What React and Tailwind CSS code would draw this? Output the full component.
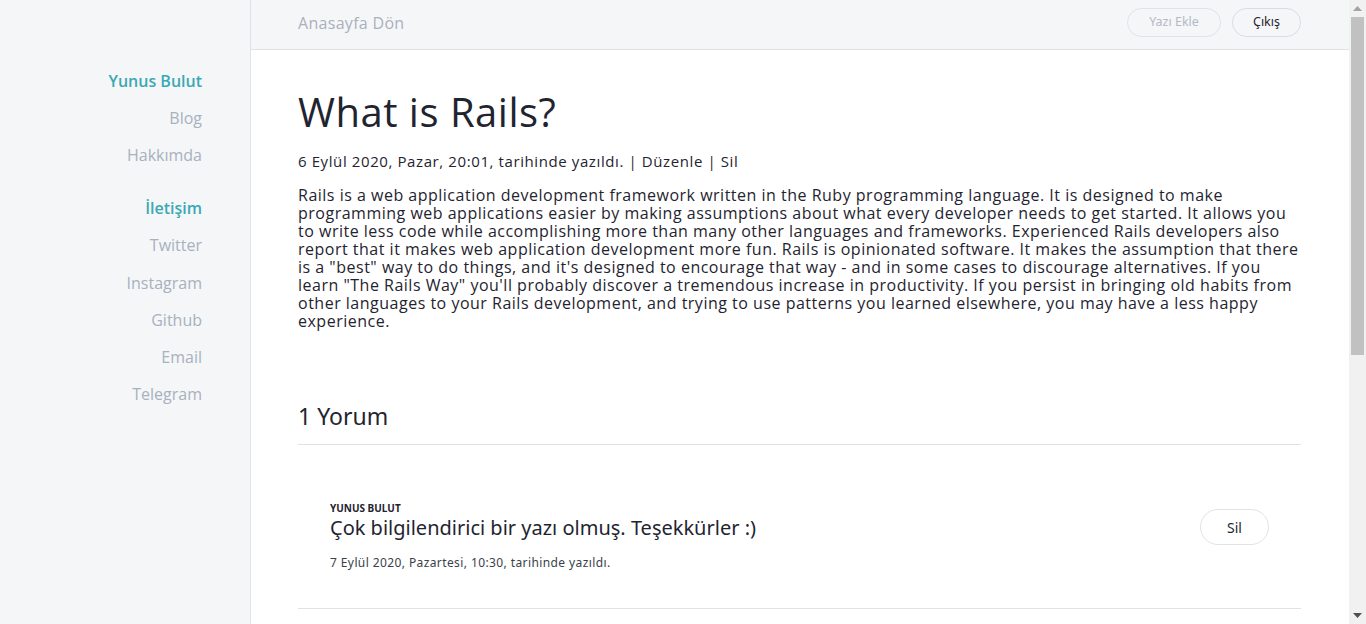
import React from "react";

const hand = { fontFamily: '"Open Sans", "Noto Sans", sans-serif' };
const sans = { fontFamily: '"Noto Sans", "Open Sans", sans-serif' };

const lines = [
  "Rails is a web application development framework written in the Ruby programming language. It is designed to make",
  "programming web applications easier by making assumptions about what every developer needs to get started. It allows you",
  "to write less code while accomplishing more than many other languages and frameworks. Experienced Rails developers also",
  "report that it makes web application development more fun. Rails is opinionated software. It makes the assumption that there",
  "is a \"best\" way to do things, and it's designed to encourage that way - and in some cases to discourage alternatives. If you",
  "learn \"The Rails Way\" you'll probably discover a tremendous increase in productivity. If you persist in bringing old habits from",
  "other languages to your Rails development, and trying to use patterns you learned elsewhere, you may have a less happy",
  "experience.",
];

export default function App() {
  return (
    <div className="flex min-h-screen bg-white" style={hand}>
      <aside className="w-[251px] shrink-0 bg-[#f5f6f8] border-r border-[#dfe3e8] pr-[48px] pt-[69px] text-right">
        <div className="text-[16px] leading-[24px] font-semibold text-[#3aa9b4]">Yunus Bulut</div>
        <div className="mt-[13px] text-[16px] leading-[24px] text-[#a7b1bf]">Blog</div>
        <div className="mt-[13px] text-[16px] leading-[24px] text-[#a7b1bf]">Hakkımda</div>
        <div className="mt-[29px] text-[16px] leading-[24px] font-semibold text-[#3aa9b4]">İletişim</div>
        <div className="mt-[13px] text-[16px] leading-[24px] text-[#a7b1bf]">Twitter</div>
        <div className="mt-[14px] text-[16px] leading-[24px] text-[#a7b1bf]">Instagram</div>
        <div className="mt-[13px] text-[16px] leading-[24px] text-[#a7b1bf]">Github</div>
        <div className="mt-[13px] text-[16px] leading-[24px] text-[#a7b1bf]">Email</div>
        <div className="mt-[13px] text-[16px] leading-[24px] text-[#a7b1bf]">Telegram</div>
      </aside>
      <main className="flex-1 min-w-0">
        <header className="h-[50px] bg-[#f5f6f8] border-b border-[#dfe3e8] flex items-center justify-between pl-[47px] pr-[48px] pb-[4px]">
          <span className="text-[16px] tracking-[0.3px] text-[#a9b1bc]">Anasayfa Dön</span>
          <div className="flex items-center gap-[11px]">
            <button className="h-[29px] w-[94px] rounded-full border border-[#dfe3e8] text-[12.5px] text-[#b3bac4]" style={sans}>Yazı Ekle</button>
            <button className="h-[29px] w-[69px] rounded-full border border-[#d8dde3] text-[12.5px] text-[#1f2430]" style={sans}>Çıkış</button>
          </div>
        </header>
        <div className="pl-[47px] pr-[48px] pt-[38px] pb-[120px] text-[#1f2430]">
          <h1 className="text-[40px] leading-[48px] font-normal tracking-[0.5px]">What is Rails?</h1>
          <div className="mt-[15px] text-[15px] leading-[20px] tracking-[0.6px]">
            6 Eylül 2020, Pazar, 20:01, tarihinde yazıldı. | Düzenle | Sil
          </div>
          <p className="mt-[15px] text-[16px] leading-[18px] tracking-[0.5px] whitespace-nowrap">
            {lines.map((l, i) => (
              <React.Fragment key={i}>
                {l}
                {i < lines.length - 1 && <br />}
              </React.Fragment>
            ))}
          </p>
          <h2 className="mt-[71px] text-[23px] leading-[30px] pb-[13px] border-b border-[#dfe3e8]" style={sans}>1 Yorum</h2>
          <div className="px-[32px] pt-[56px] pb-[37px] border-b border-[#dfe3e8] flex items-start justify-between" style={sans}>
            <div>
              <div className="text-[10px] leading-[14px] font-bold uppercase text-[#1f2430]">Yunus Bulut</div>
              <div className="text-[20px] leading-[26px] text-[#1f2430]">Çok bilgilendirici bir yazı olmuş. Teşekkürler :)</div>
              <div className="mt-[14px] text-[12px] leading-[16px] tracking-[0.4px] text-[#3a3f4a]">7 Eylül 2020, Pazartesi, 10:30, tarihinde yazıldı.</div>
            </div>
            <button className="mt-[8px] h-[36px] w-[69px] rounded-full border border-[#dfe3e8] text-[14px] text-[#1f2430]">Sil</button>
          </div>
        </div>
      </main>
      <div className="w-[17px] shrink-0 h-screen sticky top-0 bg-[#f1f1f1] flex flex-col items-center">
        <div className="h-[17px] w-full flex items-center justify-center">
          <svg width="9" height="5" viewBox="0 0 9 5"><path d="M0 5 L4.5 0 L9 5 Z" fill="#a3a3a3" /></svg>
        </div>
        <div className="w-[13px] h-[338px] bg-[#c1c1c1]" />
        <div className="flex-1" />
        <div className="h-[17px] w-full flex items-center justify-center">
          <svg width="9" height="5" viewBox="0 0 9 5"><path d="M0 0 L4.5 5 L9 0 Z" fill="#505050" /></svg>
        </div>
      </div>
    </div>
  );
}
